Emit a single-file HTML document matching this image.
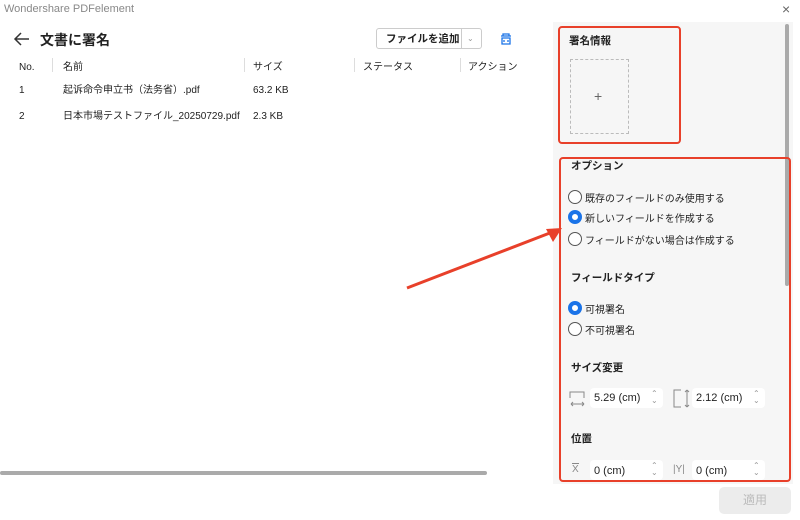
<!DOCTYPE html>
<html><head><meta charset="utf-8"><style>
*{margin:0;padding:0;box-sizing:border-box}
body{width:800px;height:520px;background:#fff;position:relative;overflow:hidden;font-family:"Liberation Sans","Noto Sans CJK JP",sans-serif;color:#222;font-size:10px}
.a{position:absolute;white-space:nowrap;line-height:18px}
.panel{position:absolute;left:553px;top:22px;width:240px;height:462px;background:#f6f6f6}
.b{font-weight:bold;font-size:10.5px}
.radio{position:absolute;width:14px;height:14px;border:1px solid #555;border-radius:50%;background:#fff}
.radio.on{border:4px solid #1a73e8}
.inp{position:absolute;height:20px;background:#fff;border-radius:4px}
.red{position:absolute;border:2px solid #e8402a;border-radius:4px}
.sp{position:absolute;color:#999;font-size:8px;line-height:7px}
</style></head><body>
<div class="a" style="left:4px;top:0px;color:#888;font-size:11px">Wondershare PDFelement</div>
<div class="a" style="left:782px;top:0px;color:#666;font-size:14px">×</div>
<svg class="a" style="left:13px;top:31px" width="18" height="16"><path d="M16 8H2M8 2L2 8l6 6" stroke="#333" stroke-width="1.5" fill="none"/></svg>
<div class="a" style="left:40px;top:31px;font-size:14px;font-weight:bold;line-height:18px">文書に署名</div>
<div class="a" style="left:376px;top:28px;width:106px;height:21px;border:1px solid #ccc;border-radius:3px"></div>
<div class="a" style="left:386px;top:30px;font-size:10.5px;font-weight:bold">ファイルを追加</div>
<div class="a" style="left:461px;top:29px;width:1px;height:19px;background:#ccc"></div>
<div class="a" style="left:467px;top:30px;color:#999;font-size:8px">⌄</div>
<svg class="a" style="left:499px;top:32px" width="14" height="14"><path d="M2 4h10M4 4V2h6v2M3 6h8v6H3zM5 8v2M9 8v2" stroke="#1a73e8" stroke-width="1.3" fill="none"/></svg>
<div class="a" style="left:19px;top:59px">No.</div>
<div class="a" style="left:52px;top:58px;width:1px;height:14px;background:#ddd"></div>
<div class="a" style="left:63px;top:59px">名前</div>
<div class="a" style="left:244px;top:58px;width:1px;height:14px;background:#ddd"></div>
<div class="a" style="left:253px;top:59px">サイズ</div>
<div class="a" style="left:354px;top:58px;width:1px;height:14px;background:#ddd"></div>
<div class="a" style="left:363px;top:59px">ステータス</div>
<div class="a" style="left:460px;top:58px;width:1px;height:14px;background:#ddd"></div>
<div class="a" style="left:468px;top:59px;width:68px;overflow:hidden">アクション</div>
<div class="a" style="left:19px;top:82px">1</div>
<div class="a" style="left:63px;top:82px">起诉命令申立书（法务省）.pdf</div>
<div class="a" style="left:253px;top:82px">63.2 KB</div>
<div class="a" style="left:19px;top:108px">2</div>
<div class="a" style="left:63px;top:108px">日本市場テストファイル_20250729.pdf</div>
<div class="a" style="left:253px;top:108px">2.3 KB</div>
<div class="a" style="left:0;top:471px;width:487px;height:4px;background:#aaa;border-radius:2px"></div>

<div class="panel"></div>
<div class="a" style="left:785px;top:24px;width:4px;height:262px;background:#aaa;border-radius:2px"></div>
<div class="a b" style="left:569px;top:32px">署名情報</div>
<div class="a" style="left:570px;top:59px;width:59px;height:75px;border:1px dashed #bbb"></div>
<div class="a" style="left:594px;top:87px;color:#666;font-size:14px">+</div>
<div class="red" style="left:558px;top:26px;width:123px;height:118px"></div>
<div class="red" style="left:559px;top:157px;width:232px;height:325px"></div>
<div class="a b" style="left:571px;top:157px">オプション</div>
<div class="radio" style="left:568px;top:190px"></div><div class="a" style="left:585px;top:191px">既存のフィールドのみ使用する</div>
<div class="radio on" style="left:568px;top:210px"></div><div class="a" style="left:585px;top:211px">新しいフィールドを作成する</div>
<div class="radio" style="left:568px;top:232px"></div><div class="a" style="left:585px;top:233px">フィールドがない場合は作成する</div>
<div class="a b" style="left:571px;top:269px">フィールドタイプ</div>
<div class="radio on" style="left:568px;top:301px"></div><div class="a" style="left:585px;top:302px">可視署名</div>
<div class="radio" style="left:568px;top:322px"></div><div class="a" style="left:585px;top:323px">不可視署名</div>
<div class="a b" style="left:571px;top:359px">サイズ変更</div>
<svg class="a" style="left:569px;top:390px" width="18" height="18"><path d="M1 8V2h14v6M2 14h13M2 14l2-2M2 14l2 2M15 14l-2-2M15 14l-2 2" stroke="#888" fill="none"/></svg>
<div class="inp" style="left:590px;top:388px;width:73px"></div>
<div class="a" style="left:594px;top:389px;font-size:11px">5.29 (cm)</div>
<div class="sp" style="left:651px;top:390px">⌃<br>⌄</div>
<svg class="a" style="left:673px;top:389px" width="18" height="20"><path d="M8 1H1v17h7M14 1v17M14 1l-2 2M14 1l2 2M14 18l-2-2M14 18l2-2" stroke="#888" fill="none"/></svg>
<div class="inp" style="left:692px;top:388px;width:73px"></div>
<div class="a" style="left:696px;top:389px;font-size:11px">2.12 (cm)</div>
<div class="sp" style="left:753px;top:390px">⌃<br>⌄</div>
<div class="a b" style="left:571px;top:430px">位置</div>
<div class="a" style="left:572px;top:463px;color:#888;font-size:10px;border-top:1px solid #888;line-height:11px">X</div>
<div class="inp" style="left:590px;top:460px;width:73px"></div>
<div class="a" style="left:594px;top:462px;font-size:11px">0 (cm)</div>
<div class="sp" style="left:651px;top:462px">⌃<br>⌄</div>
<div class="a" style="left:673px;top:461px;color:#888;font-size:10px">|Y|</div>
<div class="inp" style="left:692px;top:460px;width:73px"></div>
<div class="a" style="left:696px;top:462px;font-size:11px">0 (cm)</div>
<div class="sp" style="left:753px;top:462px">⌃<br>⌄</div>
<div class="a" style="left:719px;top:487px;width:72px;height:27px;background:#ececec;border-radius:5px;color:#bbb;text-align:center;line-height:27px;font-size:12px">適用</div>
<svg class="a" style="left:400px;top:220px" width="170" height="75"><path d="M7 68L155 11" stroke="#e8402a" stroke-width="3"/><path d="M162 8L146 9L153 22Z" fill="#e8402a"/></svg>
</body></html>
